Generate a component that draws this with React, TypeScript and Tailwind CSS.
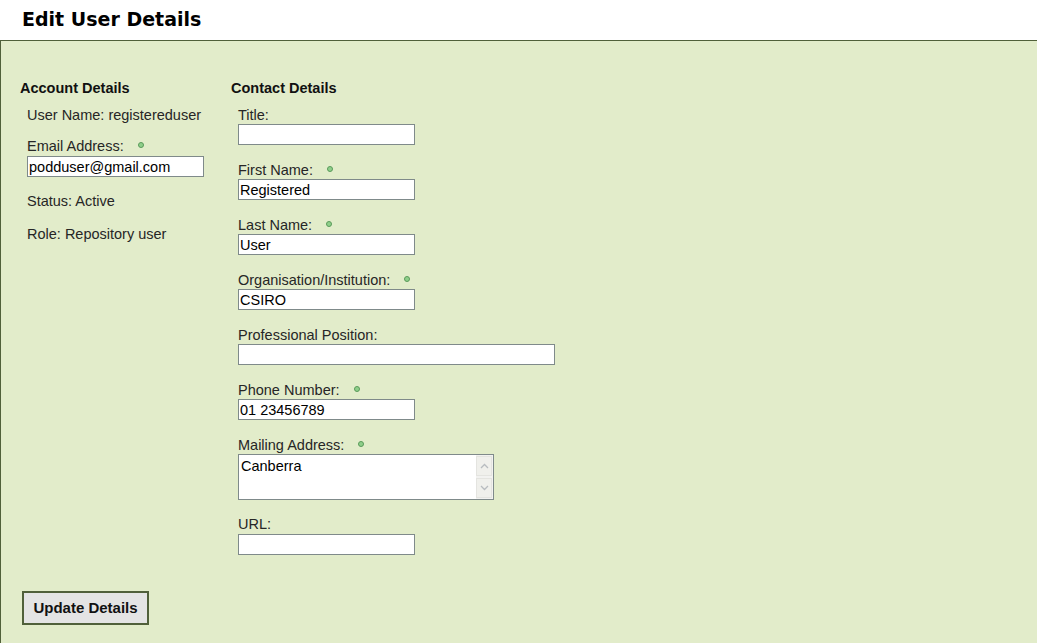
import React from "react";

const Dot = () => (
  <span className="ml-[14px] inline-block h-[6px] w-[6px] rounded-full border border-[#5a9a5a] bg-[#8fcf8a] align-middle relative top-[-2px]" />
);

const Field = ({
  label,
  value = "",
  req = false,
  w = "w-[177px]",
}: {
  label: string;
  value?: string;
  req?: boolean;
  w?: string;
}) => (
  <div className="mb-[17px]">
    <div className="h-[16px] leading-[16px]">
      {label}
      {req && <Dot />}
    </div>
    <div
      className={`mt-[1px] h-[21px] ${w} border border-[#7f8a8a] bg-white pl-[1px] pt-[1px] leading-[19px] text-black`}
    >
      {value}
    </div>
  </div>
);

export default function App() {
  return (
    <div
      className="min-h-[643px] bg-white text-[14.5px] text-[#262626]"
      style={{ fontFamily: '"Liberation Sans", Arial, sans-serif' }}
    >
      <div className="h-[40px] pl-[22px] pt-[6px]">
        <h1
          className="text-[19px] font-bold leading-[26px] text-black"
          style={{ fontFamily: '"DejaVu Sans", Verdana, sans-serif' }}
        >
          Edit User Details
        </h1>
      </div>
      <div className="min-h-[603px] border-l border-t border-[#50603a] bg-[#e2ecca] pl-[19px] pt-[39px]">
        <div className="flex">
          <div className="w-[211px]">
            <h2 className="h-[16px] font-bold leading-[16px] text-[#111]">
              Account Details
            </h2>
            <div className="pl-[7px]">
              <div className="mt-[11px] h-[16px] leading-[16px]">
                User Name: registereduser
              </div>
              <div className="mt-[15px] h-[16px] leading-[16px]">
                Email Address:
                <Dot />
              </div>
              <div className="mt-[2px] h-[21px] w-[177px] border border-[#7f8a8a] bg-white pl-[1px] pt-[1px] leading-[19px] text-black">
                podduser@gmail.com
              </div>
              <div className="mt-[16px] h-[16px] leading-[16px]">
                Status: Active
              </div>
              <div className="mt-[17px] h-[16px] leading-[16px]">
                Role: Repository user
              </div>
            </div>
          </div>
          <div>
            <h2 className="h-[16px] font-bold leading-[16px] text-[#111]">
              Contact Details
            </h2>
            <div className="mt-[11px] pl-[7px]">
              <Field label="Title:" />
              <Field label="First Name:" value="Registered" req />
              <Field label="Last Name:" value="User" req />
              <Field label="Organisation/Institution:" value="CSIRO" req />
              <Field label="Professional Position:" w="w-[317px]" />
              <Field label="Phone Number:" value="01 23456789" req />
              <div className="mb-[16px]">
                <div className="h-[16px] leading-[16px]">
                  Mailing Address:
                  <Dot />
                </div>
                <div className="mt-[1px] flex h-[46px] w-[256px] border border-[#7f8a8a] bg-white">
                  <div className="flex-1 pl-[2px] pt-[3px] leading-[16px] text-black">
                    Canberra
                  </div>
                  <div className="flex w-[17px] flex-col justify-between bg-[#f2f2f0] py-[1px] pr-[1px]">
                    <div className="flex h-[20px] items-center justify-center border border-[#e4e4e0] bg-[#f0f0ec]">
                      <svg width="9" height="6" viewBox="0 0 9 6">
                        <path d="M1 5 L4.5 1.5 L8 5" fill="none" stroke="#b8bcc0" strokeWidth="1.3" />
                      </svg>
                    </div>
                    <div className="flex h-[20px] items-center justify-center border border-[#e4e4e0] bg-[#f0f0ec]">
                      <svg width="9" height="6" viewBox="0 0 9 6">
                        <path d="M1 1 L4.5 4.5 L8 1" fill="none" stroke="#b8bcc0" strokeWidth="1.3" />
                      </svg>
                    </div>
                  </div>
                </div>
              </div>
              <div>
                <div className="h-[16px] leading-[16px]">URL:</div>
                <div className="mt-[2px] h-[21px] w-[177px] border border-[#7f8a8a] bg-white" />
              </div>
            </div>
          </div>
        </div>
        <button className="ml-[2px] mt-[36px] h-[34px] w-[127px] border-2 border-[#50603a] bg-[#e4e4e4] text-[15px] font-bold text-[#111]">
          Update Details
        </button>
      </div>
    </div>
  );
}
